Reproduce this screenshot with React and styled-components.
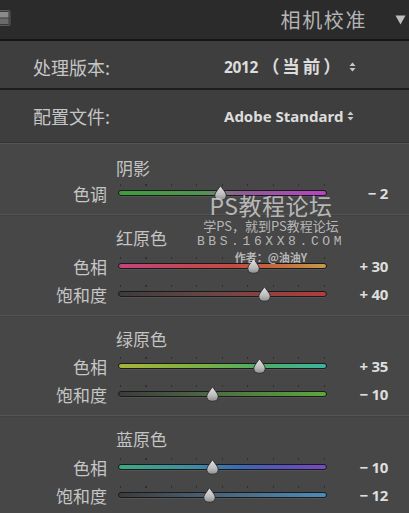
import React from "react";
import styled, { createGlobalStyle } from "styled-components";

const Global = createGlobalStyle`
  html, body { margin: 0; padding: 0; background: #474747; }
  body { font-family: "Noto Sans CJK SC", "Noto Sans", sans-serif; }
`;

const CJK = `"Noto Sans CJK SC", "Noto Sans", sans-serif`;
const LAT = `"Noto Sans", "Noto Sans CJK SC", sans-serif`;

const Panel = styled.div`
  position: relative;
  width: 409px;
  height: 513px;
  overflow: hidden;
  background: #474747;
  display: flex;
  flex-direction: column;
  & > * { flex-shrink: 0; }
`;

const Header = styled.div`
  height: 39px;
  background: #2b2b2b;
  border-bottom: 2px solid #151515;
  display: flex;
  align-items: center;
  padding-right: 3px;
`;

const HeaderIcon = styled.svg`
  width: 11px;
  height: 16px;
  margin-top: -3px;
  flex: none;
`;

const HeaderTitle = styled.div`
  margin-left: auto;
  font-family: ${CJK};
  font-size: 20px;
  letter-spacing: 1.6px;
  color: #b4b4b4;
  margin-right: 28px;
  line-height: 1;
  padding-top: 1px;
`;

const Caret = styled.svg`
  width: 11px;
  height: 10px;
  flex: none;
`;

const SettingRow = styled.div`
  height: ${(p) => p.$h}px;
  box-sizing: border-box;
  padding-top: ${(p) => p.$pt}px;
  background: #3e3e3e;
  border-bottom: ${(p) => p.$line};
  display: flex;
  align-items: center;
  padding-left: 33px;
`;

const SettingLabel = styled.div`
  font-family: ${CJK};
  font-size: 18px;
  color: #c6c6c6;
  width: 191px;
  line-height: 1;
`;

const SettingValue = styled.div`
  font-family: ${LAT};
  font-weight: 700;
  font-size: 15px;
  color: #dcdcdc;
  display: flex;
  align-items: center;
  gap: ${(p) => p.$gap}px;
  line-height: 1;
`;

const Digits = styled.span`
  font-size: 15.5px;
  letter-spacing: -0.4px;
`;

const CjkPart = styled.span`
  font-family: ${CJK};
  font-size: 17.5px;
  font-weight: 700;
  letter-spacing: 3px;
  margin-left: 4px;
`;

const Stepper = styled.svg`
  width: 7px;
  height: 10px;
  flex: none;
`;

const Section = styled.div`
  box-sizing: border-box;
  height: ${(p) => p.$h}px;
  display: flex;
  flex-direction: column;
  padding-top: ${(p) => p.$pt}px;
  border-top: 1px solid #545454;
  box-shadow: ${(p) => (p.$first ? "none" : "inset 0 1px 0 #414141")};
`;

const SectionTitle = styled.div`
  height: 24px;
  padding-left: 116px;
  display: flex;
  align-items: center;
  font-family: ${CJK};
  font-size: 17px;
  color: #c4c4c4;
  margin-bottom: ${(p) => p.$mb}px;
`;

const SliderRow = styled.div`
  height: 28px;
  display: grid;
  grid-template-columns: 107px 209px 1fr;
  column-gap: 11px;
  align-items: center;
  padding-right: 21px;
`;

const SliderLabel = styled.div`
  font-family: ${CJK};
  font-size: 17px;
  color: #c6c6c6;
  text-align: right;
  line-height: 1;
`;

const TrackArea = styled.div`
  position: relative;
  height: 28px;
  &::before {
    content: "";
    position: absolute;
    left: 2px;
    top: 5px;
    width: 206px;
    height: 2px;
    background: repeating-linear-gradient(
      to right,
      #2e2e2e 0 1px,
      transparent 1px 25.5px
    );
  }
`;

const Track = styled.div`
  position: absolute;
  left: 0;
  right: 0;
  top: 11px;
  height: 6px;
  box-sizing: border-box;
  border-radius: 3px;
  border: 1px solid #1a1a1a;
  background: ${(p) => p.$fill};
  box-shadow: 0 1px 0 rgba(255, 255, 255, 0.07);
`;

const Thumb = styled.svg`
  position: absolute;
  top: 6px;
  width: 13px;
  height: 16px;
  margin-left: -6.5px;
`;

const SliderValue = styled.div`
  font-family: ${LAT};
  font-weight: 700;
  font-size: 15px;
  color: #dedede;
  text-align: right;
  white-space: pre;
  letter-spacing: -0.3px;
`;

const Watermark = styled.div`
  position: absolute;
  left: 190px;
  top: 193px;
  width: 162px;
  display: flex;
  flex-direction: column;
  align-items: center;
  color: rgba(214, 214, 214, 0.8);
  pointer-events: none;
`;

const WmBig = styled.div`
  font-family: ${CJK};
  font-size: 23px;
  line-height: 24px;
  letter-spacing: 0.5px;
`;

const WmLine = styled.div`
  font-family: ${(p) => (p.$mono ? `"Liberation Mono", monospace` : CJK)};
  font-size: ${(p) => p.$size}px;
  line-height: ${(p) => p.$lh}px;
  letter-spacing: ${(p) => p.$ls || 0}px;
  font-weight: ${(p) => (p.$bold ? 700 : 400)};
`;

const ThumbShape = ({ x }) => (
  <Thumb viewBox="0 0 13 16" style={{ left: `${x}px` }}>
    <defs>
      <linearGradient id="tg" x1="0" y1="0" x2="0" y2="1">
        <stop offset="0" stopColor="#e2e2e2" />
        <stop offset="0.6" stopColor="#bdbdbd" />
        <stop offset="1" stopColor="#8e8e8e" />
      </linearGradient>
    </defs>
    <path
      d="M6.5 0.8 L11 7 Q12.4 9 12.2 11.2 Q11.8 15.2 8 15.2 L5 15.2 Q1.2 15.2 0.8 11.2 Q0.6 9 2 7 Z"
      fill="url(#tg)"
      stroke="#2a2a2a"
      strokeWidth="0.9"
    />
  </Thumb>
);

const Slider = ({ label, value, fill }) => {
  const x = 104.5 + (value / 100) * 104.5;
  const text = value > 0 ? `+ ${value}` : value < 0 ? `− ${Math.abs(value)}` : "0";
  return (
    <SliderRow>
      <SliderLabel>{label}</SliderLabel>
      <TrackArea>
        <Track $fill={fill} />
        <ThumbShape x={x} />
      </TrackArea>
      <SliderValue>{text}</SliderValue>
    </SliderRow>
  );
};

const sections = [
  {
    title: "阴影",
    h: 71,
    pt: 11,
    mb: 0,
    sliders: [
      {
        label: "色调",
        value: -2,
        fill: "linear-gradient(90deg,#3d9e3d,#4f944f 40%,#7a7a7a 50%,#8e5a96 60%,#b844c4)",
      },
    ],
  },
  {
    title: "红原色",
    h: 101,
    pt: 10,
    mb: 3,
    sliders: [
      {
        label: "色相",
        value: 30,
        fill: "linear-gradient(90deg,#c4447e,#c44658 30%,#c44a44 55%,#c4703e 80%,#c49a48)",
      },
      {
        label: "饱和度",
        value: 40,
        fill: "linear-gradient(90deg,#3c3c3c,#6a4646 45%,#b43c3c)",
      },
    ],
  },
  {
    title: "绿原色",
    h: 100,
    pt: 10,
    mb: 2,
    sliders: [
      {
        label: "色相",
        value: 35,
        fill: "linear-gradient(90deg,#a8b43a,#7ab044 40%,#52ac60 65%,#3cb4a0)",
      },
      {
        label: "饱和度",
        value: -10,
        fill: "linear-gradient(90deg,#3c3c3c,#4e6a44 45%,#5aaa3a)",
      },
    ],
  },
  {
    title: "蓝原色",
    h: 98,
    pt: 10,
    mb: 3,
    sliders: [
      {
        label: "色相",
        value: -10,
        fill: "linear-gradient(90deg,#3caa82,#3c8ea4 35%,#3e66b6 60%,#5a52be 80%,#7a48c4)",
      },
      {
        label: "饱和度",
        value: -12,
        fill: "linear-gradient(90deg,#3c3c3c,#4a6276 45%,#4a8cbc)",
      },
    ],
  },
];

const StepIcon = () => (
  <Stepper viewBox="0 0 7 10">
    <path d="M3.5 0.5 L6.5 4 L0.5 4 Z" fill="#c8c8c8" />
    <path d="M3.5 9.5 L6.5 6 L0.5 6 Z" fill="#c8c8c8" />
  </Stepper>
);

export default function App() {
  return (
    <>
      <Global />
      <Panel>
        <Header>
          <HeaderIcon viewBox="0 0 11 16">
            <rect x="-2" y="0.5" width="12" height="15" rx="1" fill="#3a3a3a" stroke="#5a5a5a" />
            <rect x="-1" y="2" width="9.5" height="5.5" fill="#8a8a8a" />
            <rect x="-1" y="8.5" width="9.5" height="5.5" fill="#6a6a6a" />
          </HeaderIcon>
          <HeaderTitle>相机校准</HeaderTitle>
          <Caret viewBox="0 0 11 10">
            <path d="M0.5 0.5 L10.5 0.5 L5.5 9.5 Z" fill="#bdbdbd" />
          </Caret>
        </Header>
        <SettingRow $h={49} $pt={4} $line="2px solid #1c1c1c">
          <SettingLabel>处理版本:</SettingLabel>
          <SettingValue $gap={5}>
            <span>
              <Digits>2012</Digits>
              <CjkPart>（当前）</CjkPart>
            </span>
            <StepIcon />
          </SettingValue>
        </SettingRow>
        <SettingRow $h={53} $pt={0} $line="1px solid #333">
          <SettingLabel>配置文件:</SettingLabel>
          <SettingValue $gap={4}>
            <span>Adobe Standard</span>
            <StepIcon />
          </SettingValue>
        </SettingRow>
        {sections.map((s, i) => (
          <Section key={s.title} $h={s.h} $pt={s.pt} $first={i === 0}>
            <SectionTitle $mb={s.mb}>{s.title}</SectionTitle>
            {s.sliders.map((sl) => (
              <Slider key={sl.label} {...sl} />
            ))}
          </Section>
        ))}
        <Watermark>
          <WmBig>PS教程论坛</WmBig>
          <WmLine $size={13} $lh={17}>学PS，就到PS教程论坛</WmLine>
          <WmLine $mono $size={13} $lh={16} $ls={3.6}>BBS.16XX8.COM</WmLine>
          <WmLine $size={11} $lh={14} $bold>作者：@油油Y</WmLine>
        </Watermark>
      </Panel>
    </>
  );
}
